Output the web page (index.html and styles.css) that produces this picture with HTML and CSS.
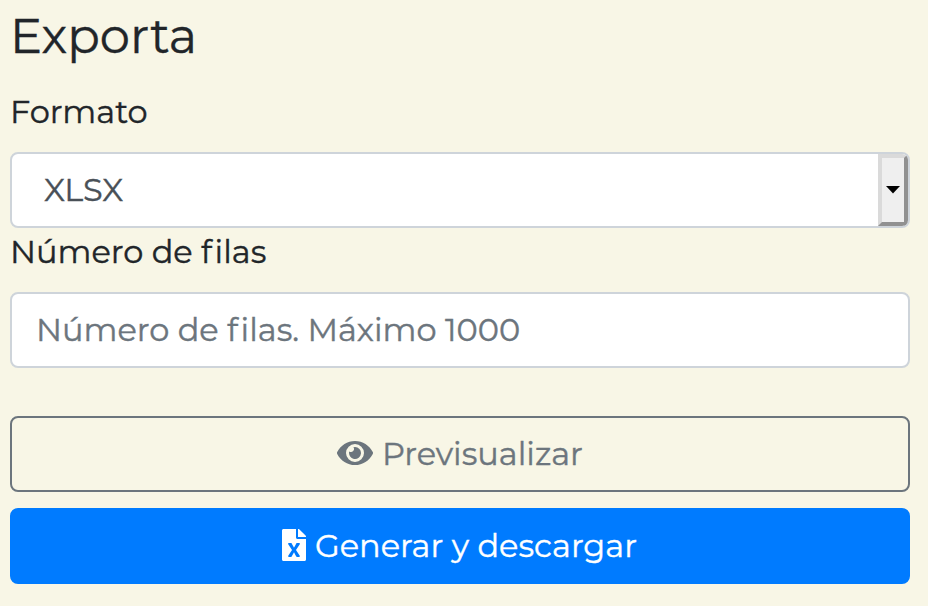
FILE: index.html
```html
<!DOCTYPE html>
<html lang="es">
<head>
<meta charset="utf-8">
<title>Exporta</title>
<link rel="stylesheet" href="styles.css">
</head>
<body>
<main class="panel">
  <h1 class="title">Exporta</h1>
  <div class="label">Formato</div>
  <div class="field select"><span>XLSX</span><span class="arrow"><svg width="14" height="8" viewBox="0 0 14 8"><path d="M0 0h14L7 7.5z"/></svg></span></div>
  <div class="label second">Número de <span class="loose">f</span>ilas</div>
  <div class="field input"><span>Número de <span class="loose">f</span>ilas. Máximo 1000</span></div>
  <button class="btn outline"><svg class="eye" viewBox="0 0 576 512"><path fill="currentColor" d="M572.52 241.4C518.29 135.59 410.93 64 288 64S57.68 135.64 3.48 241.41a32.35 32.35 0 0 0 0 29.19C57.71 376.41 165.07 448 288 448s230.32-71.64 284.52-177.41a32.35 32.35 0 0 0 0-29.19zM288 400a144 144 0 1 1 144-144 143.93 143.93 0 0 1-144 144zm0-240a95.31 95.31 0 0 0-25.31 3.79 47.85 47.85 0 0 1-66.9 66.9A95.78 95.78 0 1 0 288 160z"/></svg><span>Previsualizar</span></button>
  <button class="btn primary"><svg class="file" viewBox="0 0 384 512"><path fill="currentColor" d="M224 136V0H24C10.7 0 0 10.7 0 24v464c0 13.3 10.7 24 24 24h336c13.3 0 24-10.7 24-24V160H248c-13.2 0-24-10.8-24-24zm60.1 106.5L224 336l60.1 93.5c5.1 8-.6 18.5-10.1 18.5h-34.9c-4.4 0-8.5-2.4-10.6-6.3C208.9 405.5 192 373 192 373c-6.4 14.8-10 20-36.6 68.8-2.1 3.9-6.1 6.3-10.5 6.3H110c-9.5 0-15.2-10.5-10.1-18.5l60.3-93.5-60.3-93.5c-5.2-8 .6-18.5 10.1-18.5h34.8c4.4 0 8.5 2.4 10.6 6.3 26.1 48.8 20 33.6 36.6 68.5 0 0 6.1-11.7 36.6-68.5 2.1-3.9 6.2-6.3 10.6-6.3H274c9.5-.1 15.2 10.4 10.1 18.4zM384 121.9v6.1H256V0h6.1c6.4 0 12.5 2.5 17 7l97.9 98c4.5 4.5 7 10.6 7 16.9z"/></svg><span>Generar y descargar</span></button>
</main>
</body>
</html>
```
FILE: styles.css
```css
* { box-sizing: border-box; }
body {
  margin: 0;
  background: #f8f6e6;
  color: #212529;
  font-family: Montserrat, "Open Sans", sans-serif;
  font-size: 32px;
  line-height: 48px;
  font-variant-ligatures: none;
  -webkit-text-stroke: 0.4px currentColor;
}
.panel { padding: 7px 18px 22px 10px; }
.title { margin: 0; height: 59px; font-size: 48px; line-height: 58px; font-weight: 400; letter-spacing: 0.1px; }
.label { height: 48px; margin: 22px 0 16px; white-space: nowrap; }
.second { margin-top: 0; }
.loose { letter-spacing: 2.6px; }
.field {
  display: flex;
  align-items: center;
  height: 76px;
  background: #fff;
  border: 2px solid #ced4da;
  border-radius: 8px;
  padding-left: 24px;
  overflow: hidden;
}
.select { padding-left: 32px; color: #495057; }
.input { color: #6c757d; margin-bottom: 48px; }
.arrow {
  margin-left: auto;
  width: 30px;
  height: 72px;
  border: 4px solid;
  border-color: #dadada #919191 #919191 #dadada;
  background: #efefef;
  display: flex;
  align-items: center;
  justify-content: center;
}
.arrow svg { flex: none; fill: #000; stroke: none; }
.btn {
  display: flex;
  align-items: center;
  justify-content: center;
  width: 100%;
  height: 76px;
  padding: 0;
  border: 2px solid #6c757d;
  border-radius: 8px;
  background: transparent;
  color: #6c757d;
  font: inherit;
  font-variant-ligatures: none;
  -webkit-text-stroke: inherit;
}
.primary { margin-top: 16px; border-color: #007bff; background: #007bff; color: #fff; }
.eye, .file { height: 32px; margin: 0 9px 2px 0; }
.eye { width: 36px; }
.file { width: 24px; }
.primary { padding-right: 1px; }
```
